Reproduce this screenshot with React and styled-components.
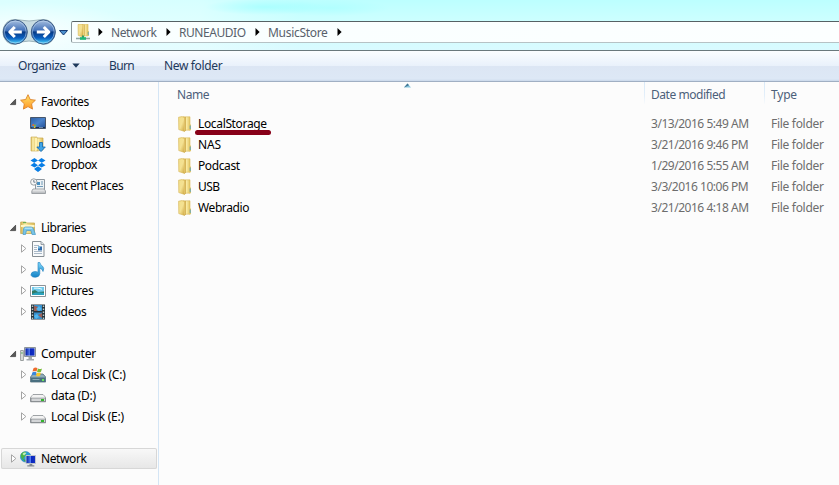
import React from "react";
import styled, { createGlobalStyle } from "styled-components";

const GlobalStyle = createGlobalStyle`
  * { box-sizing: border-box; }
  html, body { margin: 0; overflow: hidden; }
  body { font: 12px/21px "Noto Sans", "Open Sans", sans-serif; color: #000; background: #fcfcfc; }
  svg { display: block; flex: none; }
`;

const Window = styled.div`
  width: 839px;
  height: 485px;
  display: flex;
  flex-direction: column;
  overflow: hidden;
  background: #fcfcfc;
`;

const TitleArea = styled.header`
  height: 51px;
  flex: none;
  display: flex;
  align-items: flex-start;
  padding-top: 18px;
  border-bottom: 1px solid #69787c;
  background:
    radial-gradient(ellipse 110px 32px at 30px 34px, rgba(255, 255, 255, 0.85), transparent),
    radial-gradient(ellipse 60px 8px at 265px 7px, rgba(150, 255, 255, 0.6), transparent),
    radial-gradient(ellipse 60px 8px at 330px 8px, rgba(160, 255, 255, 0.5), transparent),
    linear-gradient(90deg, rgba(240, 255, 255, 0.6), rgba(240, 255, 255, 0.5) 200px, transparent 300px),
    linear-gradient(#bcffff, #ccffff 20px, #d6fcff 43px, #d9faff);
`;

const NavButtons = styled.div`
  width: 71px;
  height: 28px;
  flex: none;
`;

const AddressBar = styled.nav`
  flex: 1;
  height: 22px;
  margin-top: 3px;
  display: flex;
  align-items: center;
  padding-left: 3px;
  border: 1px solid #879497;
  border-top-color: #566265;
  border-bottom-color: #b6c2c5;
  border-right: 0;
  border-radius: 2px 0 0 2px;
  background: linear-gradient(90deg, #f9ffff, #fcffff);
`;

const Crumb = styled.span`
  width: ${(p) => p.$width}px;
  margin-left: 8px;
  color: #58616b;
  white-space: nowrap;
  letter-spacing: ${(p) => p.$tracking || 0}px;
`;

const CrumbArrow = styled.svg`
  margin-left: ${(p) => p.$gap || 7}px;
`;

const Toolbar = styled.div`
  height: 31px;
  flex: none;
  display: flex;
  align-items: center;
  padding-left: 18px;
  color: #1e395b;
  border-bottom: 1px solid #a0afc3;
  background: linear-gradient(#fafdff, #e9f1fb 15px, #dce6f4 15px, #dde8f6 28px, #cad8ea 30px);
`;

const Command = styled.button`
  width: ${(p) => p.$width}px;
  height: 28px;
  padding: 0 0 2px;
  border: 0;
  display: flex;
  align-items: center;
  gap: 6px;
  background: none;
  color: inherit;
  font: inherit;
  white-space: nowrap;
  letter-spacing: ${(p) => p.$tracking || 0}px;
`;

const Content = styled.div`
  flex: 1;
  display: flex;
  min-height: 0;
`;

const Sidebar = styled.aside`
  width: 159px;
  flex: none;
  padding: 9px 1px 0;
  border-right: 1px solid #d4e5f5;
`;

const Group = styled.section`
  margin-bottom: 21px;
`;

const TreeRow = styled.div`
  height: 21px;
  display: flex;
  align-items: center;
  padding-left: ${(p) => (p.$nested ? 19 : 9)}px;
  border-radius: 2px;
  box-shadow: ${(p) => (p.$selected ? "inset 0 0 0 1px #d7d7d7" : "none")};
  background: ${(p) => (p.$selected ? "linear-gradient(#f9f9f9, #e6e6e6)" : "none")};
`;

const Twisty = styled.span`
  width: 10px;
  flex: none;
`;

const Label = styled.span`
  margin-left: ${(p) => p.$gap ?? 5}px;
  white-space: nowrap;
  letter-spacing: ${(p) => p.$tracking || 0}px;
`;

const FileList = styled.main`
  flex: 1;
  min-width: 0;
`;

const HeaderRow = styled.div`
  position: relative;
  height: 31px;
  display: grid;
  grid-template-columns: 486px 120px 1fr;
  color: #4c607a;
`;

const HeaderCell = styled.div`
  height: 22px;
  padding: 2px 0 0 ${(p) => p.$inset}px;
  border-right: ${(p) => (p.$last ? "0" : "1px solid")};
  border-image: linear-gradient(#d8e9f8, #e3effa 60%, #fcfcfc) 1;
  letter-spacing: ${(p) => p.$tracking || 0}px;
`;

const SortMark = styled.svg`
  position: absolute;
  left: 245px;
  top: 1px;
`;

const FileRow = styled.div`
  height: 21px;
  display: grid;
  grid-template-columns: 473px 120px 1fr;
  padding-left: 19px;
  color: #6d6d6d;
  white-space: nowrap;
`;

const NameCell = styled.div`
  position: relative;
  display: flex;
  align-items: center;
  color: #000;
`;

const MetaCell = styled.div`
  letter-spacing: ${(p) => p.$tracking || 0}px;
`;

const Marker = styled.i`
  position: absolute;
  left: 17px;
  top: 17px;
  width: 76px;
  height: 5px;
  border-radius: 3px;
  background: #870018;
`;

function Gradients() {
  return (
    <svg width="0" height="0" aria-hidden="true">
      <defs>
        <linearGradient id="gold" x2="1"><stop stopColor="#d7b24c" /><stop offset=".3" stopColor="#fbefad" /><stop offset="1" stopColor="#dfbd58" /></linearGradient>
        <linearGradient id="goldFront" x2="1" y2="1"><stop stopColor="#f3e08c" /><stop offset=".5" stopColor="#f4e192" /><stop offset="1" stopColor="#cda53c" /></linearGradient>
        <linearGradient id="goldBack" x2="1"><stop stopColor="#e2c462" /><stop offset=".5" stopColor="#f9eaa2" /><stop offset="1" stopColor="#e3c562" /></linearGradient>
        <linearGradient id="star" x2="0" y2="1"><stop stopColor="#ffe56a" /><stop offset="1" stopColor="#ff9524" /></linearGradient>
        <linearGradient id="screen" x2="1" y2="1"><stop stopColor="#2c5ea4" /><stop offset=".5" stopColor="#4a83cc" /><stop offset="1" stopColor="#1f4b92" /></linearGradient>
        <linearGradient id="royal" x2="1"><stop stopColor="#001aa0" /><stop offset=".5" stopColor="#5880f4" /><stop offset=".55" stopColor="#0926bd" /><stop offset="1" stopColor="#1231c5" /></linearGradient>
        <linearGradient id="aqua" x2="0" y2="1"><stop stopColor="#7cd6fa" /><stop offset="1" stopColor="#1383c7" /></linearGradient>
        <linearGradient id="metal" x2="0" y2="1"><stop stopColor="#fafafa" /><stop offset="1" stopColor="#aeb2b6" /></linearGradient>
        <linearGradient id="orb" x2="0" y2="1"><stop stopColor="#a9c0e0" /><stop offset=".45" stopColor="#3f6fb8" /><stop offset=".5" stopColor="#073a85" /><stop offset=".75" stopColor="#0a5fc0" /><stop offset="1" stopColor="#4fdcff" /></linearGradient>
      </defs>
    </svg>
  );
}

const Flag = ({ x = 0, y = 0, s = 1 }) => (
  <g transform={`translate(${x} ${y}) scale(${s})`}>
    <path d="M1 1q2-1.5 4 0L4 4.2q-2-1-4 0z" fill="#ee6b2e" />
    <path d="M5.5 1.2q2 1.2 4 0L8.5 4.5q-2 1.2-4 0z" fill="#79bc36" />
    <path d="M0 5q2-1.2 4 0L3 8q-2-1-4 0z" fill="#3687de" />
    <path d="M4.5 5.2q2 1.2 4 0L7.5 8.4q-2 1.2-4 0z" fill="#f8c82c" />
  </g>
);

const folder = (
  <>
    <path d="M5 .8h7v13.4H5z" fill="url(#goldBack)" stroke="#d9b95c" strokeWidth=".6" />
    <path d="M.6 1.2L4 .6l2.6 1v13.8L.8 13.6z" fill="url(#goldFront)" stroke="#d3b04c" strokeWidth=".6" />
    <path d="M6 2l2-1v13.6L6 15.4z" fill="#c79f3c" />
    <path d="M6.4 2l1-.6v12.8l-1 .8z" fill="#f0d987" />
    <path d="M11 8.5h2v5.8h-2z" fill="#e6c766" />
    <path d="M12.2 9.5v3.6" stroke="#4b9ec4" strokeWidth=".9" />
  </>
);

const drive = (
  <>
    <path d="M3 6.5h10l2.7 3v4.3H.5V9.5z" fill="url(#metal)" stroke="#888d91" strokeWidth=".8" />
    <path d="M1 10h14.5v3.5H1z" fill="#d3d5d7" stroke="#777c80" strokeWidth=".7" />
    <path d="M3 7h10l2 2.5H1z" fill="#f3f3f3" />
    <path d="M11 11h3v2h-3z" fill="#33b52d" />
  </>
);

const art = {
  folder,
  star: <path d="M8 .7l2.2 4.8 5.2.7-3.8 3.6.9 5.3L8 12.6l-4.6 2.5.9-5.3L.6 6.2l5.1-.7z" fill="url(#star)" stroke="#dd8126" strokeWidth=".9" />,
  desktop: (
    <>
      <path d="M.5 2.5h15v11H.5z" fill="url(#screen)" stroke="#47566b" />
      <path d="M1 12h14v1H1z" fill="#182e50" />
      <Flag x="2" y="9" s=".45" />
      <path d="M9 12.5h4" stroke="#8eaed0" strokeWidth=".7" />
    </>
  ),
  downloads: (
    <>
      <path d="M1 1h6v14H1z" fill="url(#gold)" stroke="#cfb15d" strokeWidth=".7" />
      <path d="M6 2h7v12l-6 1z" fill="url(#gold)" stroke="#c8a84c" strokeWidth=".7" />
      <path d="M5 2l2-.5v13L5 15z" fill="#fff2b2" />
      <path d="M9.5 6.5h3V11h2.8L11 15.6 6.8 11h2.7z" fill="#3fa4e8" stroke="#1267b1" strokeWidth=".8" />
    </>
  ),
  dropbox: <path d="M4.5 1L8 3.4 4.2 5.8.5 3.4zM11.5 1l4 2.4-3.7 2.4L8 3.4zM.5 8.2l3.7-2.4L8 8.2l-3.5 2.4zM8 8.2l3.8-2.4 3.7 2.4-4 2.4zM4.5 11.4L8 9.2l3.5 2.2v1L8 15l-3.5-2.6z" fill="#087ee6" />,
  recent: (
    <>
      <path d="M5.5 1.5h9v10h-9z" fill="#edf2f5" stroke="#8e979f" />
      <path d="M7 4h3v3H7z" fill="#4890c2" />
      <path d="M11 4h2M11 6h2M7 8.5h6" stroke="#719bb8" />
      <path d="M3 11h11l1.5 2v2.5H1.8V13z" fill="url(#metal)" stroke="#8d9297" strokeWidth=".8" />
      <circle cx="3.8" cy="4" r="3.2" fill="#f7f7f7" stroke="#91979c" strokeWidth=".9" />
      <path d="M3.8 2v2.2h1.7" fill="none" stroke="#576878" strokeWidth=".8" />
    </>
  ),
  libraries: (
    <>
      <path d="M.7 2h5l1 1h7.8v10.5H.7z" fill="url(#gold)" stroke="#c8ac55" strokeWidth=".8" />
      <path d="M1 5h13.5v2H1z" fill="#fff6c7" />
      <path d="M3 14.5L3.5 9q.3-2 2-2h5.5q2 0 2.5 2l2 5.5h-3.5l-1-4H6.5l-1 4z" fill="#78c4e8" stroke="#4799c5" strokeWidth=".7" />
      <path d="M4.7 8.2h7.5" stroke="#c5effc" />
      <path d="M3 2.7h3" stroke="#56a545" />
    </>
  ),
  document: (
    <>
      <path d="M2.5.5H11l3 3v12H2.5z" fill="#f8fafb" stroke="#868e94" />
      <path d="M11 .5v3h3" fill="#dce2e7" stroke="#868e94" strokeWidth=".8" />
      <path d="M4 4.5h5M4 6.5h3M4 8.5h3M4 10.5h8M4 12.5h8" stroke="#a0b1c2" strokeWidth=".9" />
      <path d="M8 5.5h4v4H8z" fill="#2f6aaa" /><path d="M8 5.5h2v2H8z" fill="#72b9e2" />
    </>
  ),
  music: <path d="M8 .5h1.8q.5 2.5 3 4 1.7 1.8.2 5Q12.5 7 9.8 6v5.8q-.3 3.3-4.5 3.5Q1 15.2 1 12.6 1.2 9.7 5 9.5q1.8 0 3 .7z" fill="url(#aqua)" stroke="#2180bd" strokeWidth=".6" />,
  pictures: (
    <>
      <path d="M.5 2.5h15v11H.5z" fill="#fff" stroke="#8c9297" />
      <path d="M2 4h12v8H2z" fill="#71c9eb" />
      <path d="M2 8l3-1 3 2 6-.5V12H2z" fill="#327a65" />
      <path d="M2 11q5-3 12-1v2H2z" fill="#2ba2bd" />
      <path d="M4 5.2q4-.6 8 1" fill="none" stroke="#eaffff" />
    </>
  ),
  video: (
    <>
      <path d="M1 .5h14v15H1z" fill="#27353c" />
      <path d="M4 1h8v6H4zM4 8.5h8V15H4z" fill="#3690ce" />
      <path d="M4 1.5l5 2L7 7H4zM12 9l-4 2 4 3z" fill="#9b5f57" />
      <path d="M6 5l3-3 3 3-3 2zM4 12l3-2 2 3-3 2z" fill="#52b8ef" />
      <path d="M2.5 1.5v14M13.5 1.5v14" stroke="#bdcccd" strokeWidth="1.4" strokeDasharray="1.4 1.6" />
    </>
  ),
  computer: (
    <>
      <path d="M.6 4.5h2.8v10H.6z" fill="#dce0dd" stroke="#868c8c" strokeWidth=".8" /><path d="M1.2 7h1.5" stroke="#3ca143" />
      <path d="M4.5 1.5h11v9h-11z" fill="#d8dcdf" stroke="#8c9499" />
      <path d="M5.5 2.3h9v7.3h-9z" fill="url(#royal)" />
      <path d="M8.5 11h3.5v2h2v1.5H6.5V13h2z" fill="#a4aaaf" />
    </>
  ),
  system: (
    <>
      <path d="M3 7h10l2.7 3v5H.5v-5z" fill="#91adb9" stroke="#526d7a" strokeWidth=".8" />
      <path d="M1 10.5h14.5V15H1z" fill="#496f80" />
      <path d="M2.5 12.5h7" stroke="#8eaab4" />
      <path d="M12 12h2v2h-2z" fill="#69e45a" />
      <Flag x="2.5" y=".3" s="1" />
    </>
  ),
  drive,
  network: (
    <>
      <circle cx="5.7" cy="5.8" r="5.3" fill="#269ed4" stroke="#287cac" strokeWidth=".5" />
      <path d="M1 3q2.500-3 5-2L5 3.500l1.500 1L4 6 3 9Q0 6 1 3z" fill="#49b447" />
      <path d="M2.500 3q2-2.300 4-1L4 4.500z" fill="#c9efbd" />
      <path d="M3 8l3 1v2q-2.500-.5-3-3z" fill="#3f9f52" />
      <path d="M6 4.5h9.5v8H6z" fill="url(#royal)" stroke="#bfc4cb" />
      <path d="M9.5 13h2.8v1.2h2v1.3h-7v-1.3h2.2z" fill="#818991" />
    </>
  ),
  networkFolder: (
    <>
      <g transform="translate(2.500 -.5) scale(.88)">{folder}</g>
      <path d="M1 14.5h14" stroke="#8fa9a5" strokeWidth="1.6" />
      <path d="M8 11.500v3" stroke="#319b69" strokeWidth="2" />
      <path d="M5 13.200h6v2.600H5z" fill="#20b875" />
    </>
  ),
};

const Icon = ({ name }) => <svg width="16" height="16" viewBox="0 0 16 16">{art[name]}</svg>;

const Arrow = ({ open }) => (
  <Twisty>
    {open
      ? <svg width="8" height="8"><path d="M5.600 1.200v5.400H.4z" fill="#595959" stroke="#333" strokeWidth=".7" /></svg>
      : <svg width="8" height="9"><path d="M1.500.8v7.400L5.900 4.500z" fill="#fff" stroke="#a4a4a4" /></svg>}
  </Twisty>
);

const TreeItem = ({ item, nested, expandable, open, selected }) => (
  <TreeRow $nested={nested} $selected={selected}>
    {expandable ? <Arrow open={open} /> : <Twisty />}
    <Icon name={item[1]} />
    <Label $tracking={item[2]}>{item[0]}</Label>
  </TreeRow>
);

const groups = [
  { head: ["Favorites", "star", -0.38], expandable: false, items: [["Desktop", "desktop", -0.5], ["Downloads", "downloads", -0.4], ["Dropbox", "dropbox", -0.4], ["Recent Places", "recent", -0.36]] },
  { head: ["Libraries", "libraries", -0.45], expandable: true, items: [["Documents", "document", -0.42], ["Music", "music", -0.2], ["Pictures", "pictures", -0.35], ["Videos", "video", -0.35]] },
  { head: ["Computer", "computer", -0.25], expandable: true, items: [["Local Disk (C:)", "system", -0.18], ["data (D:)", "drive", -0.3], ["Local Disk (E:)", "drive", -0.24]] },
];

const files = [
  ["LocalStorage", "3/13/2016 5:49 AM", -0.35],
  ["NAS", "3/21/2016 9:46 PM", -0.2],
  ["Podcast", "1/29/2016 5:55 AM", -0.4],
  ["USB", "3/3/2016 10:06 PM", -0.5],
  ["Webradio", "3/21/2016 4:18 AM", -0.4],
];

const BreadcrumbArrow = ({ gap }) => (
  <CrumbArrow $gap={gap} width="5" height="8"><path d="M.5 0v8L4.6 4z" fill="#000" /></CrumbArrow>
);

const Orb = ({ cx, back }) => (
  <g>
    <circle cx={cx} cy="14" r="12" fill="url(#orb)" stroke="#3c5c88" />
    <circle cx={cx} cy="14" r="10.9" fill="none" stroke="#c3dcf3" strokeOpacity=".65" strokeWidth=".8" />
    <path
      transform={`translate(${cx} 14) scale(${back ? 1 : -1} 1)`}
      d="M6.500 0H-5M-.5-5l-5 5 5 5" fill="none" stroke="#fff" strokeWidth="3.1" strokeLinejoin="round"
    />
  </g>
);

export default function App() {
  return (
    <Window>
      <GlobalStyle />
      <TitleArea>
        <NavButtons>
          <svg width="71" height="28" viewBox="0 0 71 28">
            <path d="M15 1.5q14 3 28 0c16 0 16 25 0 25q-14-7-28 0c-16 0-16-25 0-25z" fill="#c9dde2" stroke="#9db4bb" />
            <Orb cx={15.3} back />
            <Orb cx={43.3} />
            <path d="M59.5 12.5h8L63.5 17z" fill="#4c92cf" stroke="#173c74" />
          </svg>
        </NavButtons>
        <AddressBar>
          <Icon name="networkFolder" />
          <BreadcrumbArrow gap={7} />
          <Crumb $width={45} $tracking={-0.4}>Network</Crumb>
          <BreadcrumbArrow gap={10} />
          <Crumb $width={66} $tracking={-0.45}>RUNEAUDIO</Crumb>
          <BreadcrumbArrow gap={10} />
          <Crumb $width={59} $tracking={-0.3}>MusicStore</Crumb>
          <BreadcrumbArrow gap={10} />
        </AddressBar>
      </TitleArea>
      <Toolbar>
        <Command $width={91} $tracking={-0.45}>Organize<svg width="8" height="5"><path d="M.3.5h7.4L4 4.700z" fill="#1e395b" /></svg></Command>
        <Command $width={55} $tracking={-0.6}>Burn</Command>
        <Command $width={80} $tracking={-0.35}>New folder</Command>
      </Toolbar>
      <Content>
        <Sidebar>
          {groups.map((g) => (
            <Group key={g.head[0]}>
              <TreeItem item={g.head} expandable open />
              {g.items.map((item) => <TreeItem key={item[0]} item={item} nested expandable={g.expandable} />)}
            </Group>
          ))}
          <TreeItem item={["Network", "network", -0.4]} expandable selected />
        </Sidebar>
        <FileList>
          <HeaderRow>
            <HeaderCell $inset={18} $tracking={-0.4}>Name</HeaderCell>
            <HeaderCell $inset={6} $tracking={-0.45}>Date modified</HeaderCell>
            <HeaderCell $inset={6} $tracking={-0.2} $last>Type</HeaderCell>
            <SortMark width="7" height="5"><path d="M0 4.5L3.5.6 7 4.5z" fill="#85c4dc" /><path d="M0 4.5L3.5.6 5 2.2" fill="#3f7391" /></SortMark>
          </HeaderRow>
          {files.map(([name, date, tracking], i) => (
            <FileRow key={name}>
              <NameCell>
                <Icon name="folder" />
                <Label $gap={4} $tracking={tracking}>{name}</Label>
                {i === 0 && <Marker />}
              </NameCell>
              <MetaCell $tracking={-0.47}>{date}</MetaCell>
              <MetaCell $tracking={-0.3}>File folder</MetaCell>
            </FileRow>
          ))}
        </FileList>
      </Content>
      <Gradients />
    </Window>
  );
}
